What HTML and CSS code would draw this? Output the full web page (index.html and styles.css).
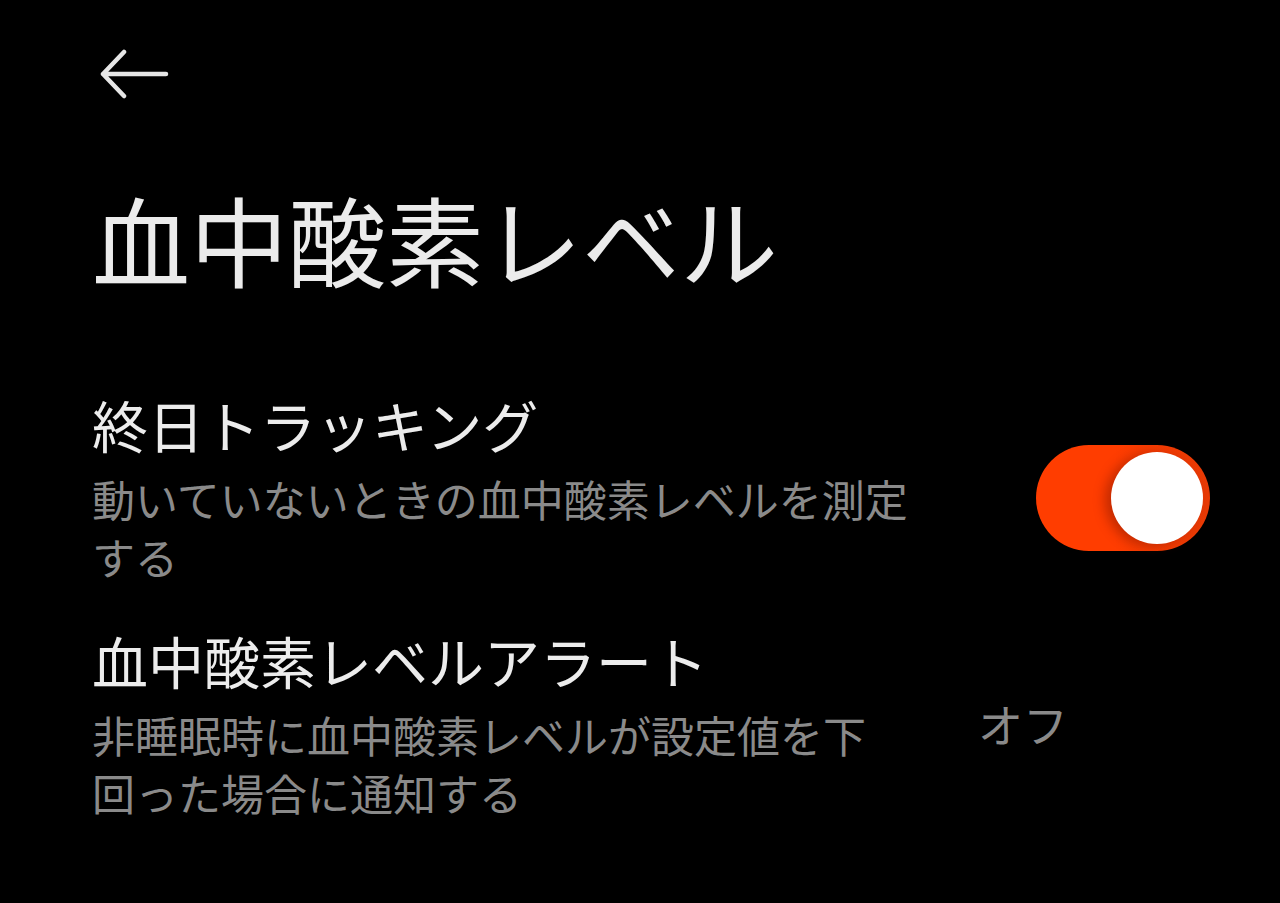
FILE: index.html
```html
<!DOCTYPE html>
<html lang="ja">
<head>
<meta charset="utf-8">
<link rel="stylesheet" href="styles.css">
</head>
<body>
<div class="screen">
  <div class="topbar">
    <svg class="back" width="70" height="52" viewBox="0 0 70 52">
      <path d="M24 4 L3 26 L24 48 M3 26 L66 26" fill="none" stroke="#e6e6e6" stroke-width="4.5" stroke-linecap="round" stroke-linejoin="round"/>
    </svg>
  </div>
  <h1 class="title">血中酸素レベル</h1>
  <div class="row row-switch">
    <div class="text text-wide">
      <div class="label">終日トラッキング</div>
      <div class="desc">動いていないときの血中酸素レベルを測定する</div>
    </div>
    <div class="switch"><div class="knob"></div></div>
  </div>
  <div class="row row-value">
    <div class="text text-narrow">
      <div class="label">血中酸素レベルアラート</div>
      <div class="desc">非睡眠時に血中酸素レベルが設定値を下回った場合に通知する</div>
    </div>
    <div class="value">オフ</div>
  </div>
</div>
</body>
</html>
```
FILE: styles.css
```css
html, body {
  margin: 0;
  padding: 0;
  background: #000;
}
body {
  width: 1280px;
  height: 903px;
  overflow: hidden;
  font-family: "Noto Sans CJK JP", "Noto Sans", sans-serif;
  color: #e8e8e8;
}
.screen {
  padding: 0 70px 0 92px;
}
.topbar {
  padding-top: 48px;
  height: 52px;
  padding-left: 8px;
}
.back { display: block; }
.title {
  margin: 0;
  margin-top: 72px;
  font-size: 98px;
  font-weight: 400;
  line-height: 130px;
  color: #ebebeb;
}
.row {
  display: flex;
  align-items: center;
}
.row-switch { margin-top: 89px; }
.row-value { margin-top: 42px; }
.text { flex: none; }
.text-wide { width: 830px; }
.text-narrow { width: 800px; }
.label {
  font-size: 56px;
  line-height: 66px;
  color: #ececec;
}
.desc {
  font-size: 43px;
  line-height: 58px;
  color: #8a8a8a;
  margin-top: 12px;
}
.switch {
  margin-left: auto;
  margin-top: 20px;
  width: 174px;
  height: 106px;
  border-radius: 53px;
  background: linear-gradient(90deg, #ff3d00 0%, #ff3d00 45%, #e83a05 100%);
  display: flex;
  align-items: center;
  justify-content: flex-end;
  padding-right: 7px;
  box-sizing: border-box;
}
.knob {
  width: 92px;
  height: 92px;
  border-radius: 50%;
  background: #fff;
  box-shadow: -6px 2px 12px rgba(120, 20, 0, 0.45);
}
.value {
  margin-left: 86px;
  font-size: 45px;
  color: #8a8a8a;
  line-height: 58px;
}
```
